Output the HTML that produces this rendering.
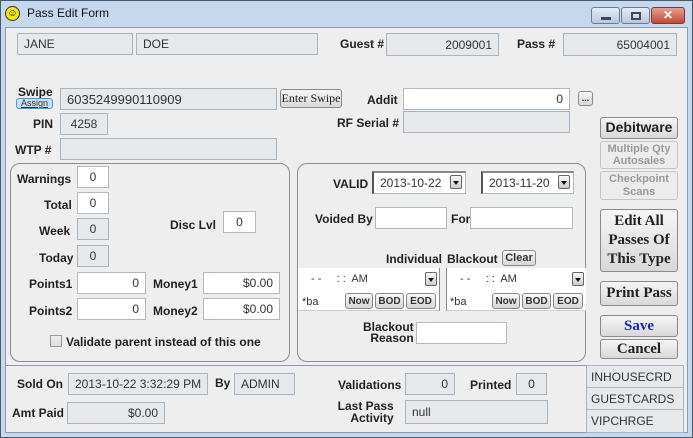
<!DOCTYPE html>
<html><head><meta charset="utf-8"><style>
*{box-sizing:border-box}
body{margin:0;width:693px;height:438px;overflow:hidden;background:#5a6b7a;font-family:"Liberation Sans",Arial,sans-serif;}
.win{position:absolute;left:0;top:0;width:693px;height:438px;background:#c5d8ee;border:1px solid #4a5a6a;}
.client{position:absolute;left:5px;top:27px;width:683px;height:406px;background:#eeeeee;border:1px solid #8a9ab0;}
.a{position:absolute}
.l{position:absolute;font-size:12px;font-weight:bold;color:#222;white-space:nowrap}
.b{position:absolute;border:1px solid #a8b4c4;background:#e6e8ea;font-size:12px;color:#333;padding:0 6px;display:flex;align-items:center;white-space:nowrap}
.w{background:#fff;border-color:#b0b8c4}
.r{justify-content:flex-end}
.c{justify-content:center}
.btn{position:absolute;border:1px solid #8a8a8a;border-radius:3px;background:linear-gradient(#f6f6f6,#d8d8d8);display:flex;align-items:center;justify-content:center;text-align:center;font-size:11px;color:#222;line-height:1.1}
.serif{font-family:"Liberation Serif",serif;font-weight:bold}
.dis{color:#9a9a9a;font-weight:bold;background:#ececec;border-color:#c4c4c4}
.panel{position:absolute;border:1px solid #8e8e8e;border-radius:10px}
.dd{position:absolute;width:12px;height:14px;border:1px solid #666;border-radius:2px;background:linear-gradient(#fafafa,#ccc)}
.dd:after{content:"";position:absolute;left:2px;top:5px;border:3px solid transparent;border-top:4px solid #111}
.sm{position:absolute;border:1px solid #888;border-radius:3px;background:linear-gradient(#f8f8f8,#d6d6d6);font-size:10px;font-weight:bold;color:#333;display:flex;align-items:center;justify-content:center;height:16px}
</style></head><body>
<div class="win">
<div class="a" style="left:4px;top:5px;width:15px;height:15px;border-radius:50%;background:#f4e21a;border:1px solid #333;font-size:10px;line-height:13px;text-align:center">☺</div>
<div class="a" style="left:26px;top:5px;font-size:12px;color:#111">Pass Edit Form</div>
<div class="a" style="left:590px;top:6px;width:29px;height:17px;border:1px solid #6a7d94;border-radius:3px;background:linear-gradient(#e4ecf6,#b8c8dc)"><div class="a" style="left:9px;top:9px;width:10px;height:3px;background:#445"></div></div>
<div class="a" style="left:620px;top:6px;width:29px;height:17px;border:1px solid #6a7d94;border-radius:3px;background:linear-gradient(#e4ecf6,#b8c8dc)"><div class="a" style="left:9px;top:4px;width:10px;height:8px;border:2px solid #445"></div></div>
<div class="a" style="left:650px;top:6px;width:34px;height:17px;border:1px solid #7a3a30;border-radius:3px;background:linear-gradient(#e8a090,#c04a38);color:#fff;font-weight:bold;font-size:12px;text-align:center;line-height:15px">✕</div>
</div>
<div class="client"></div>

<div class="b" style="left:17px;top:33px;width:116px;height:22px">JANE</div>
<div class="b" style="left:136px;top:33px;width:182px;height:22px">DOE</div>
<div class="l" style="left:340px;top:37px">Guest #</div>
<div class="b r" style="left:386px;top:33px;width:113px;height:23px">2009001</div>
<div class="l" style="left:517px;top:37px">Pass #</div>
<div class="b r" style="left:563px;top:33px;width:114px;height:23px">65004001</div>

<div class="l" style="left:18px;top:85px">Swipe</div>
<div class="a" style="left:16px;top:98px;width:37px;height:11px;border:1px solid #4a9ad0;border-radius:3px;background:#c8e0f0;font-size:9px;text-align:center;line-height:9px;color:#333;text-decoration:underline">Assign</div>
<div class="b" style="left:60px;top:88px;width:217px;height:22px;font-size:13px">6035249990110909</div>
<div class="btn serif" style="left:280px;top:89px;width:62px;height:19px;font-weight:normal;font-size:12px">Enter Swipe</div>
<div class="l" style="left:367px;top:93px">Addit</div>
<div class="b w r" style="left:403px;top:88px;width:167px;height:22px">0</div>
<div class="btn" style="left:578px;top:91px;width:15px;height:15px;font-weight:bold;font-size:9px">...</div>

<div class="l" style="left:33px;top:117px">PIN</div>
<div class="b c" style="left:60px;top:113px;width:48px;height:22px">4258</div>
<div class="l" style="left:337px;top:116px">RF Serial #</div>
<div class="b" style="left:403px;top:111px;width:167px;height:22px"></div>
<div class="l" style="left:15px;top:143px">WTP #</div>
<div class="b" style="left:60px;top:138px;width:217px;height:22px"></div>

<div class="btn" style="left:600px;top:117px;width:78px;height:22px;font-size:14px;font-weight:bold">Debitware</div>
<div class="btn dis" style="left:600px;top:141px;width:78px;height:28px">Multiple Qty<br>Autosales</div>
<div class="btn dis" style="left:600px;top:171px;width:78px;height:29px">Checkpoint<br>Scans</div>
<div class="btn serif" style="left:600px;top:209px;width:78px;height:63px;font-size:15px;line-height:1.25">Edit All<br>Passes Of<br>This Type</div>
<div class="btn serif" style="left:600px;top:281px;width:78px;height:25px;font-size:15px">Print Pass</div>
<div class="btn serif" style="left:600px;top:315px;width:78px;height:22px;font-size:15px;color:#1a2ab0">Save</div>
<div class="btn serif" style="left:600px;top:339px;width:78px;height:20px;font-size:15px">Cancel</div>

<div class="panel" style="left:10px;top:163px;width:280px;height:199px"></div>
<div class="l" style="left:17px;top:172px">Warnings</div><div class="b w c" style="left:77px;top:166px;width:32px;height:22px">0</div>
<div class="l" style="left:44px;top:198px">Total</div><div class="b w c" style="left:77px;top:192px;width:32px;height:22px">0</div>
<div class="l" style="left:39px;top:224px">Week</div><div class="b c" style="left:77px;top:218px;width:32px;height:22px">0</div>
<div class="l" style="left:39px;top:251px">Today</div><div class="b c" style="left:77px;top:245px;width:32px;height:22px">0</div>
<div class="l" style="left:170px;top:218px">Disc Lvl</div><div class="b w c" style="left:223px;top:211px;width:33px;height:22px">0</div>
<div class="l" style="left:29px;top:277px">Points1</div><div class="b w r" style="left:77px;top:272px;width:69px;height:22px">0</div>
<div class="l" style="left:153px;top:277px">Money1</div><div class="b w r" style="left:203px;top:272px;width:77px;height:22px">$0.00</div>
<div class="l" style="left:29px;top:304px">Points2</div><div class="b w r" style="left:77px;top:298px;width:69px;height:22px">0</div>
<div class="l" style="left:153px;top:304px">Money2</div><div class="b w r" style="left:203px;top:298px;width:77px;height:22px">$0.00</div>
<div class="a" style="left:50px;top:335px;width:12px;height:12px;border:1px solid #999;background:linear-gradient(#eee,#ddd)"></div>
<div class="l" style="left:66px;top:335px">Validate parent instead of this one</div>

<div class="panel" style="left:297px;top:163px;width:289px;height:199px"></div>
<div class="l" style="left:333px;top:177px">VALID</div>
<div class="b w" style="left:372px;top:171px;width:94px;height:23px;border-left:2px solid #555;border-top:2px solid #888">2013-10-22</div><div class="dd" style="left:450px;top:175px"></div>
<div class="b w" style="left:481px;top:171px;width:93px;height:23px;border-left:2px solid #555;border-top:2px solid #888">2013-11-20</div><div class="dd" style="left:558px;top:175px"></div>
<div class="l" style="left:315px;top:212px">Voided By</div><div class="b w" style="left:375px;top:207px;width:72px;height:22px"></div>
<div class="l" style="left:451px;top:212px">For</div><div class="b w" style="left:470px;top:207px;width:103px;height:22px"></div>
<div class="l" style="left:386px;top:252px">Individual</div><div class="l" style="left:447px;top:252px">Blackout</div>
<div class="sm" style="left:502px;top:250px;width:34px;font-size:11px">Clear</div>
<div class="a" style="left:298px;top:268px;width:142px;height:43px;background:#fff;border-right:1px solid #888;border-bottom:1px solid #ccc"></div>
<div class="a" style="left:311px;top:273px;font-size:11px;color:#333">- -&nbsp;&nbsp;&nbsp;&nbsp; : :&nbsp; AM</div><div class="dd" style="left:425px;top:272px"></div>
<div class="a" style="left:302px;top:296px;font-size:11px;color:#333">*ba</div>
<div class="sm" style="left:345px;top:293px;width:28px">Now</div><div class="sm" style="left:375px;top:293px;width:29px">BOD</div><div class="sm" style="left:406px;top:293px;width:30px">EOD</div>
<div class="a" style="left:446px;top:268px;width:140px;height:43px;background:#fff;border-left:1px solid #888;border-bottom:1px solid #ccc"></div>
<div class="a" style="left:460px;top:273px;font-size:11px;color:#333">- -&nbsp;&nbsp;&nbsp;&nbsp; : :&nbsp; AM</div><div class="dd" style="left:572px;top:272px"></div>
<div class="a" style="left:450px;top:296px;font-size:11px;color:#333">*ba</div>
<div class="sm" style="left:492px;top:293px;width:28px">Now</div><div class="sm" style="left:522px;top:293px;width:29px">BOD</div><div class="sm" style="left:553px;top:293px;width:30px">EOD</div>
<div class="l" style="left:363px;top:322px;text-align:right;line-height:11px">Blackout<br>&nbsp;&nbsp;Reason</div>
<div class="b w" style="left:416px;top:322px;width:91px;height:22px"></div>

<div class="a" style="left:5px;top:365px;width:581px;height:68px;border:1px solid #8a9ab0;border-right:none"></div>
<div class="l" style="left:17px;top:377px">Sold On</div><div class="b" style="left:68px;top:373px;width:140px;height:22px">2013-10-22 3:32:29 PM</div>
<div class="l" style="left:215px;top:376px">By</div><div class="b" style="left:234px;top:373px;width:61px;height:22px">ADMIN</div>
<div class="l" style="left:12px;top:406px">Amt Paid</div><div class="b r" style="left:67px;top:402px;width:98px;height:22px">$0.00</div>
<div class="l" style="left:338px;top:378px">Validations</div><div class="b r" style="left:405px;top:373px;width:50px;height:22px">0</div>
<div class="l" style="left:470px;top:378px">Printed</div><div class="b c" style="left:516px;top:373px;width:31px;height:22px">0</div>
<div class="l" style="left:337px;top:400px;text-align:right;line-height:12px">Last Pass<br>&nbsp;&nbsp;&nbsp;&nbsp;Activity</div>
<div class="b" style="left:405px;top:400px;width:143px;height:24px">null</div>
<div class="a" style="left:586px;top:365px;width:98px;height:68px;border:1px solid #9aa8b8;background:#e6e8ea"></div>
<div class="b" style="left:586px;top:365px;width:98px;height:23px;font-size:12px;padding-left:4px">INHOUSECRD</div>
<div class="b" style="left:586px;top:387px;width:98px;height:23px;font-size:12px;padding-left:4px">GUESTCARDS</div>
<div class="b" style="left:586px;top:409px;width:98px;height:24px;font-size:12px;padding-left:4px">VIPCHRGE</div>
</body></html>
